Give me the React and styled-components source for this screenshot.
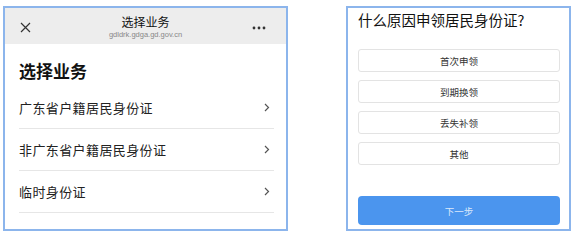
import React from 'react';
import styled, { createGlobalStyle } from 'styled-components';

const GlobalStyle = createGlobalStyle`
  html, body {
    margin: 0;
    padding: 0;
    background: #fff;
  }
  body {
    font-family: "Noto Sans CJK SC", "Noto Sans", sans-serif;
    color: #222;
  }
`;

const Page = styled.div`
  display: flex;
  align-items: flex-start;
  width: 574px;
  height: 237px;
  padding: 6px 0 0 3px;
  box-sizing: border-box;
  gap: 58px;
`;

const Frame = styled.div`
  width: ${p => p.w}px;
  height: 225px;
  box-sizing: border-box;
  border: 2px solid #8cb5ec;
  background: #fff;
  overflow: hidden;
  display: flex;
  flex-direction: column;
`;

const Header = styled.div`
  height: 36px;
  background: #ededed;
  display: grid;
  grid-template-columns: 40px 1fr 40px;
  align-items: center;
  flex-shrink: 0;
`;

const HeaderTitle = styled.div`
  display: flex;
  flex-direction: column;
  align-items: center;
  line-height: 1;
`;

const TitleText = styled.span`
  font-size: 12px;
  color: #111;
  margin-top: 2px;
`;

const UrlText = styled.span`
  font-family: "Liberation Sans", Arial, sans-serif;
  font-size: 7.5px;
  color: #888;
  margin-top: 3px;
`;

const IconCell = styled.div`
  display: flex;
  align-items: center;
  justify-content: ${p => p.end ? 'flex-start' : 'center'};
  padding-left: ${p => p.end ? '6px' : '0'};
  padding-top: 3px;
`;

const Body = styled.div`
  padding: 0 12px 0 14px;
`;

const BigTitle = styled.h1`
  margin: 17px 0 6px;
  font-size: 17px;
  font-weight: 700;
  line-height: 20px;
  color: #111;
`;

const Row = styled.div`
  display: flex;
  align-items: center;
  justify-content: space-between;
  height: 41px;
  border-bottom: 1px solid #e6e6e6;
  font-size: 13px;
  letter-spacing: 0.4px;
  color: #222;
  padding-right: 4px;
`;

const Question = styled.div`
  font-size: 14.5px;
  color: #111;
  padding: 2px 0 0 10px;
  line-height: 20px;
  height: 41px;
  box-sizing: border-box;
  flex-shrink: 0;
`;

const Options = styled.div`
  display: flex;
  flex-direction: column;
  gap: 8px;
  padding: 0 9px 0 10px;
`;

const Option = styled.div`
  height: 23px;
  box-sizing: border-box;
  border: 1px solid #e3e3e3;
  border-radius: 3px;
  display: flex;
  align-items: center;
  justify-content: center;
  font-size: 9.5px;
  color: #333;
`;

const NextButton = styled.div`
  margin: 31px 9px 0 10px;
  height: 29px;
  flex-shrink: 0;
  border-radius: 4px;
  background: #4b95ee;
  color: #dbe9fb;
  font-size: 9.5px;
  display: flex;
  align-items: center;
  justify-content: center;
`;

const Chevron = () => (
  <svg width="6" height="9" viewBox="0 0 6 9">
    <path d="M1 1l3.5 3.5L1 8" fill="none" stroke="#555" strokeWidth="1.2" />
  </svg>
);

const CloseIcon = () => (
  <svg width="11" height="11" viewBox="0 0 11 11">
    <path d="M1 1l9 9M10 1l-9 9" stroke="#333" strokeWidth="1.2" />
  </svg>
);

const MoreIcon = () => (
  <svg width="14" height="4" viewBox="0 0 14 4">
    <circle cx="2" cy="2" r="1.4" fill="#333" />
    <circle cx="7" cy="2" r="1.4" fill="#333" />
    <circle cx="12" cy="2" r="1.4" fill="#333" />
  </svg>
);

const services = ['广东省户籍居民身份证', '非广东省户籍居民身份证', '临时身份证'];
const reasons = ['首次申领', '到期换领', '丢失补领', '其他'];

export default function App() {
  return (
    <>
      <GlobalStyle />
      <Page>
        <Frame w={285}>
          <Header>
            <IconCell><CloseIcon /></IconCell>
            <HeaderTitle>
              <TitleText>选择业务</TitleText>
              <UrlText>gdldrk.gdga.gd.gov.cn</UrlText>
            </HeaderTitle>
            <IconCell end><MoreIcon /></IconCell>
          </Header>
          <Body>
            <BigTitle>选择业务</BigTitle>
            {services.map(s => (
              <Row key={s}>
                <span>{s}</span>
                <Chevron />
              </Row>
            ))}
          </Body>
        </Frame>
        <Frame w={225}>
          <Question>什么原因申领居民身份证?</Question>
          <Options>
            {reasons.map(r => <Option key={r}>{r}</Option>)}
          </Options>
          <NextButton>下一步</NextButton>
        </Frame>
      </Page>
    </>
  );
}
